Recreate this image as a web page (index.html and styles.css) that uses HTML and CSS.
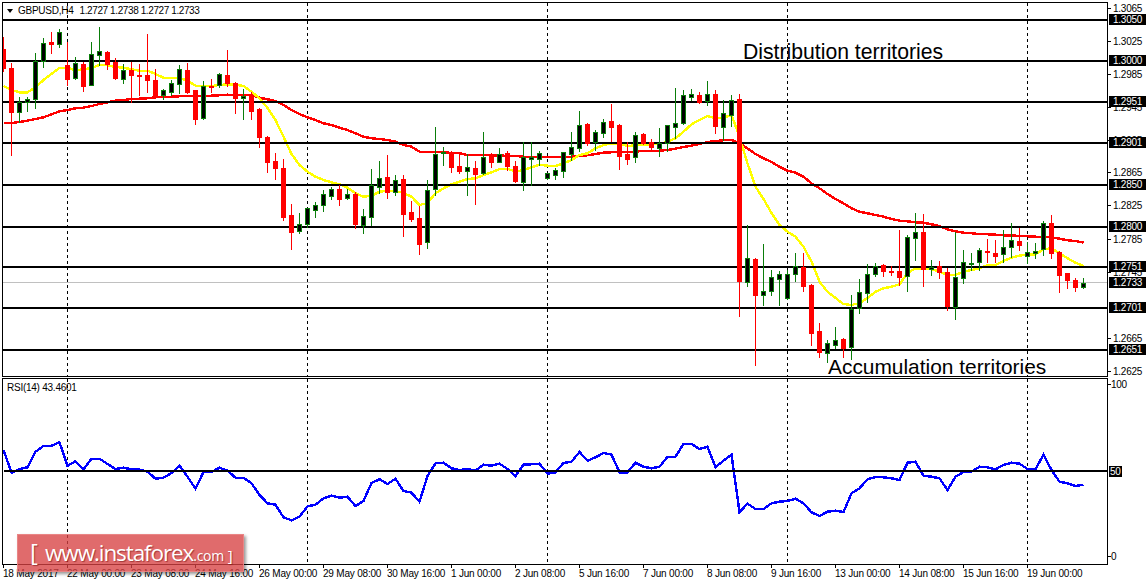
FILE: index.html
```html
<!DOCTYPE html>
<html>
<head>
    <title>GBPUSD,H4</title>
    <meta charset="utf-8" />
    <link rel="stylesheet" href="styles.css">
</head>
<body>
    <div id="chart">
        <div class="row row-price">
            <div class="pane">
                <svg id="price-plot" class="plot" width="1104" height="373" viewBox="3 3 1104 373"></svg>
                <div class="pane-title symbol"><span class="arrow"></span><span>GBPUSD,H4</span><span class="quotes">1.2727 1.2738 1.2727 1.2733</span></div>
                <div class="note note-top">Distribution territories</div>
                <div class="note note-bottom">Accumulation territories</div>
            </div>
            <div id="price-axis" class="axis"></div>
        </div>
        <div class="row row-rsi">
            <div class="pane">
                <svg id="rsi-plot" class="plot" width="1104" height="185" viewBox="3 379 1104 185"></svg>
                <div class="pane-title rsi-title">RSI(14) 43.4601</div>
            </div>
            <div id="rsi-axis" class="axis"></div>
        </div>
        <div class="time-axis">
            <span>18 May 2017</span>
            <span>22 May 00:00</span>
            <span>23 May 08:00</span>
            <span>24 May 16:00</span>
            <span>26 May 00:00</span>
            <span>29 May 08:00</span>
            <span>30 May 16:00</span>
            <span>1 Jun 00:00</span>
            <span>2 Jun 08:00</span>
            <span>5 Jun 16:00</span>
            <span>7 Jun 00:00</span>
            <span>8 Jun 08:00</span>
            <span>9 Jun 16:00</span>
            <span>13 Jun 00:00</span>
            <span>14 Jun 08:00</span>
            <span>15 Jun 16:00</span>
            <span>19 Jun 00:00</span>
        </div>
        <div class="watermark"><span class="bracket">[</span><span class="site">www.instaforex</span><span class="tld">.com</span><span class="bracket-end">]</span></div>
    </div>
    <script src="chart.js"></script>
</body>
</html>
```

FILE: styles.css
```css
html, body {
    margin: 0;
    background-color: white;
    overflow: hidden;
}
#chart {
    position: relative;
    width: 1147px;
    height: 585px;
    box-sizing: border-box;
    padding: 2px 0 0 2px;
    font-family: "Liberation Sans", Arial, sans-serif;
    font-size: 10px;
    letter-spacing: -0.25px;
    color: black;
}
.row {
    display: flex;
}
.row-price {
    height: 375px;
    margin-bottom: 1px;
}
.row-rsi {
    height: 187px;
}
.pane {
    position: relative;
    flex: 0 0 1106px;
    box-sizing: border-box;
    border: 1px solid black;
}
.axis {
    position: relative;
    flex: 1;
}
.plot {
    display: block;
    shape-rendering: crispEdges;
}

/* pane captions */
.pane-title {
    position: absolute;
    line-height: 12px;
    white-space: nowrap;
}
.symbol {
    left: 4px;
    top: 2px;
    display: flex;
    align-items: center;
}
.arrow {
    width: 0;
    height: 0;
    margin-right: 5px;
    border-left: 3.5px solid transparent;
    border-right: 3.5px solid transparent;
    border-top: 4px solid black;
}
.quotes {
    margin-left: 6px;
    letter-spacing: -0.4px;
}
.rsi-title {
    left: 4px;
    top: 3px;
}
.note {
    position: absolute;
    font-size: 21.2px;
    letter-spacing: 0;
    line-height: 24px;
    white-space: nowrap;
}
.note-top {
    left: 740px;
    top: 37px;
}
.note-bottom {
    left: 825px;
    top: 352px;
    font-size: 20.9px;
}

/* right hand scale */
.tick, .tag {
    position: absolute;
    height: 10px;
    line-height: 10px;
    white-space: nowrap;
}
.tick {
    left: 5px;
}
.tick::before {
    content: "";
    position: absolute;
    left: -5px;
    top: 4px;
    width: 3px;
    height: 1px;
    background-color: black;
}
.tick.near {
    left: 3px;
}
.tick.near::before {
    left: -3px;
}
.tag {
    left: 1px;
    height: 11px;
    line-height: 11px;
    margin-top: -1px;
    padding: 0 4px;
    background-color: black;
    color: white;
}
.tag.small {
    padding: 0 1px;
}

/* bottom scale */
.time-axis {
    display: flex;
    padding-left: 1px;
}
.time-axis span {
    flex: 0 0 64px;
    line-height: 12px;
    letter-spacing: -0.2px;
    white-space: nowrap;
}
.time-axis span::before {
    content: "";
    display: block;
    width: 1px;
    height: 3px;
    background-color: black;
}

/* site stamp */
.watermark {
    position: absolute;
    left: 17px;
    top: 534px;
    width: 227px;
    height: 38px;
    box-sizing: border-box;
    padding-left: 12px;
    display: flex;
    align-items: baseline;
    background-color: rgba(215, 65, 67, 0.78);
    border: 1px solid rgba(235, 140, 140, 0.8);
    box-shadow: 2px 2px 3px rgba(0, 0, 0, 0.4);
    font-family: "Open Sans", sans-serif;
    letter-spacing: 0;
    color: white;
    line-height: 34px;
    text-shadow: 1px 1px 1px rgba(120, 20, 20, 0.6);
}
.watermark span {
    flex: none;
}
.bracket {
    font-size: 24px;
    width: 15px;
}
.site {
    font-size: 22.5px;
    letter-spacing: -1.1px;
}
.tld {
    font-size: 14px;
    letter-spacing: -0.3px;
}
.bracket-end {
    font-size: 15px;
    margin-left: 4px;
}
```

FILE: chart.js
```js
var SVG_NS = "http://www.w3.org/2000/svg";

// high, body top, body bottom, low, 1 = bull candle (pixel rows, one bar every 8px)
var candles = [
    [37,49,68,71,0],[63,68,112,155,0],[97,102,112,122,1],[97,99,102,111,1],[53,61,99,108,1],[38,43,61,67,1],
    [32,42,44,53,0],[29,32,44,47,1],[42,65,79,85,0],[57,63,78,79,1],[62,64,86,91,0],[42,54,85,85,1],
    [27,51,55,65,1],[51,52,64,69,0],[58,62,78,79,0],[64,70,79,83,1],[62,70,75,102,0],[64,75,76,95,0],
    [34,75,80,92,0],[69,80,95,97,0],[89,90,95,99,1],[80,83,92,95,1],[65,69,84,93,1],[63,70,92,93,0],
    [90,90,119,124,0],[81,86,118,119,1],[79,86,87,92,0],[73,74,85,87,1],[50,75,83,86,0],[82,83,98,113,0],
    [89,96,98,119,1],[92,95,111,119,0],[108,109,137,147,0],[136,137,162,172,0],[153,161,168,179,0],[159,168,217,220,0],
    [204,215,232,249,0],[213,224,231,233,1],[208,208,224,227,1],[202,205,210,217,1],[190,194,205,211,1],[187,189,196,199,1],
    [185,189,199,205,0],[189,194,198,199,1],[192,194,224,228,0],[209,216,225,233,1],[169,185,217,225,1],[161,178,187,193,1],
    [155,177,192,198,0],[175,180,192,195,1],[175,179,214,236,0],[201,212,219,221,0],[206,218,244,254,0],[180,190,242,248,1],
    [127,154,189,195,1],[147,152,153,165,1],[151,152,167,172,0],[154,166,171,173,0],[154,167,171,195,1],[161,168,174,204,0],
    [132,157,173,174,1],[153,154,162,167,0],[148,154,162,162,1],[151,153,166,170,0],[161,166,181,182,0],[142,157,182,190,1],
    [142,157,159,185,1],[151,153,159,165,1],[173,173,178,179,1],[168,170,175,179,1],[152,152,171,177,1],[132,147,154,160,1],
    [111,125,148,151,1],[123,124,143,145,0],[130,132,142,150,1],[119,122,133,137,1],[104,121,127,141,0],[124,125,156,169,0],
    [142,154,159,164,0],[132,135,157,162,1],[133,134,143,144,0],[139,142,147,149,0],[128,143,148,156,1],[125,125,143,151,1],
    [88,123,127,138,1],[90,95,123,124,1],[89,94,97,100,1],[92,95,102,103,0],[81,94,101,105,1],[90,94,126,133,0],
    [100,113,127,140,1],[95,100,115,126,1],[94,99,281,316,0],[225,258,282,286,1],[258,259,295,365,0],[244,291,295,305,1],
    [270,277,291,295,1],[271,274,279,305,1],[270,274,298,299,1],[253,266,274,281,1],[253,267,286,291,0],[284,285,333,345,0],
    [323,331,352,357,0],[340,343,353,362,1],[327,340,345,348,1],[338,339,348,357,0],[295,309,347,359,1],[279,292,308,313,1],
    [264,274,293,302,1],[263,266,274,276,1],[264,265,271,276,0],[266,271,272,275,0],[230,271,277,285,0],[235,237,276,291,1],
    [213,232,238,260,1],[214,232,269,286,0],[260,267,269,275,1],[261,266,272,278,0],[268,272,306,310,0],[232,277,307,319,1],
    [250,262,278,283,1],[253,263,264,270,1],[248,250,262,270,1],[239,251,252,262,0],[240,253,256,262,0],[230,247,254,262,1],
    [223,240,247,257,1],[228,241,245,250,0],[242,252,256,263,1],[243,251,253,258,1],[221,223,249,255,1],[215,223,253,258,0],
    [251,252,275,292,0],[273,273,280,288,0],[278,280,287,291,0],[278,283,287,288,1]
];

var fastMa = [
    86,90,92.3,92.3,87.3,80,74,68,67.7,70.3,69.3,68,65,65.3,67,67.7,69.3,70.7,70.7,74,77.7,78,78,80.7,85.7,86,86,85,84.3,84.7,86,91.7,
    98.3,108,120,136.7,154,165,171.7,176.7,180,182.3,184.3,187.7,193.3,196.7,195.7,191.7,190.7,191,193,196.7,205,203,193.3,188.3,184.3,
    181.7,179,178.3,175,172.3,169,168.7,171.7,170,167.3,164.7,165.7,166,163.3,160,155,153.3,148.3,145,143.3,143.3,146,145.3,144.3,144.3,
    144,141.7,138.3,131.7,124.3,120,116,118.3,117.7,115,136.7,163.3,186.7,199,213,225,231.7,236.7,246.7,261.7,281.7,291.7,298,304,305,
    303,298,291.7,288.3,286.7,284.3,273,268.3,268.3,269,271.7,275,275,271.7,270,268.3,265,265,261,257.7,255.7,254.3,254.3,249.3,248.3,
    253.3,258.3,262.7,266
];

var slowMa = [
    123,123,122,120.7,119,117.3,114.3,111.3,110,108.3,107.7,106,104,102.3,100.7,100,99,98.7,98.3,97.3,97,96.7,96.3,96,95.7,95.7,95.7,
    95.3,94.7,95,95,95,97.7,99.3,101,105,110,114,117.3,120,123.3,125,127.7,130,133.3,136.7,138.3,139,140,141.7,145,146.7,151.7,152,152,
    152,153,153.3,155,155,155,155.3,155.3,156,156,156.7,157,157,157,157,157,156.7,155.7,155.3,154,152.7,152.3,152,152,151.7,150.7,150.7,
    150.7,150,148.7,147,145.7,144,142,141,140.3,140,143,148.5,154,158.3,162,166.7,170.7,172.7,176.7,183.3,188.3,194,199,203.3,208.3,211.7,
    213.3,215,216.7,219,220.7,221.3,222.3,222.7,224.3,226,229.3,231.3,232.7,233.3,234,234.3,234.7,235.3,235.3,236,236.3,236.7,237,237.3,
    238.7,240.3,241,242.7
];

var rsi = [
    450,472.7,469,467.3,451.7,446,445.7,442.3,465.7,461.3,469.3,458.7,458.7,464,469,467.7,469.3,469.7,471.7,478.7,477.7,473,465.7,476.7,
    488.7,472,472,467.7,470.7,477.7,477.7,483.3,495,503.3,504.7,517.3,520.3,516.7,506.3,504.7,498.3,495.7,497.7,496.7,506,501,483,479.3,
    484,478.7,491,492.7,501.7,476,463.3,462.7,468.3,470,469,470.7,464.7,465.7,463.7,469,476,464.7,464.3,463.7,473.7,472.3,463,461.7,452,
    460.7,457.3,453,454.7,472.3,472.3,462.7,466.7,468.3,466.7,456.7,456.7,444,444,449,446.7,467,460.7,454.7,512,503.7,509,509,503.3,501.7,
    501,498.7,503.3,512.3,516,511.7,510.7,512,493.3,488.3,479.3,477,477.3,478.3,480,462.7,461.7,475.7,476.7,478.3,490,476.7,472,471.7,
    466.7,467.3,469.3,465,462.7,463.7,469,469,454.7,470,481.7,483.3,486,484.7
];

var levels = [19, 60, 101, 142, 184, 226, 266, 307, 349];
var dashes = [67, 307, 547, 787, 1027];

var priceTicks = [["1.3065",8],["1.3025",41],["1.2985",74],["1.2945",107],["1.2905",140],["1.2865",172],["1.2825",205],["1.2785",239],["1.2745",272],["1.2665",338],["1.2625",371]];
var priceTags = [["1.3050",19],["1.3000",60],["1.2951",101],["1.2901",142],["1.2850",184],["1.2800",226],["1.2751",266],["1.2733",282],["1.2701",307],["1.2651",349]];

function add(svg, name, attrs) {
    var el = document.createElementNS(SVG_NS, name);
    for (var key in attrs) el.setAttribute(key, attrs[key]);
    svg.appendChild(el);
    return el;
}

function barX(i) {
    return 3 + 8 * i;
}

function drawDashes(svg, top, bottom) {
    for (var i = 0; i < dashes.length; i++) {
        add(svg, "line", { x1: dashes[i] + 0.5, x2: dashes[i] + 0.5, y1: top, y2: bottom, stroke: "black", "stroke-dasharray": "3 3" });
    }
}

function drawCurve(svg, values, color) {
    var pts = [];
    for (var i = 0; i < values.length; i++) pts.push((barX(i) + 0.5) + "," + values[i]);
    add(svg, "polyline", { points: pts.join(" "), fill: "none", stroke: color, "stroke-width": 2.4 });
}

function drawCandle(svg, c, i) {
    var x = barX(i);
    var color = c[4] ? "#0a7d0a" : "#ff0000";
    add(svg, "rect", { x: x, y: c[0], width: 1, height: c[3] - c[0] + 1, fill: color });
    add(svg, "rect", { x: x - 2, y: c[1], width: 5, height: c[2] - c[1] + 1, fill: color });
    if (c[4] && c[2] - c[1] > 1) {
        add(svg, "rect", { x: x - 1, y: c[1] + 1, width: 3, height: c[2] - c[1] - 1, fill: "black" });
    }
}

function addAxisItem(axis, text, cls, top) {
    var el = document.createElement("div");
    el.className = cls;
    el.textContent = text;
    el.style.top = top + "px";
    axis.appendChild(el);
}

var pricePlot = document.getElementById("price-plot");
drawDashes(pricePlot, 3, 376);
add(pricePlot, "rect", { x: 3, y: 282, width: 1104, height: 1, fill: "#c0c0c0" });
drawCurve(pricePlot, slowMa, "#ff0000");
drawCurve(pricePlot, fastMa, "#ffff00");
for (var i = 0; i < levels.length; i++) {
    add(pricePlot, "rect", { x: 3, y: levels[i], width: 1104, height: 2, fill: "black" });
}
for (var i = 0; i < candles.length; i++) drawCandle(pricePlot, candles[i], i);

var rsiPlot = document.getElementById("rsi-plot");
drawDashes(rsiPlot, 379, 564);
drawCurve(rsiPlot, rsi, "#0000ff");
add(rsiPlot, "rect", { x: 4, y: 470, width: 1103, height: 2, fill: "black" });

var priceAxis = document.getElementById("price-axis");
for (var i = 0; i < priceTicks.length; i++) addAxisItem(priceAxis, priceTicks[i][0], "tick", priceTicks[i][1] - 6);
for (var i = 0; i < priceTags.length; i++) addAxisItem(priceAxis, priceTags[i][0], "tag", priceTags[i][1] - 6);

var rsiAxis = document.getElementById("rsi-axis");
addAxisItem(rsiAxis, "100", "tick near", 2);
addAxisItem(rsiAxis, "0", "tick near", 174);
addAxisItem(rsiAxis, "50", "tag small", 89);
```
